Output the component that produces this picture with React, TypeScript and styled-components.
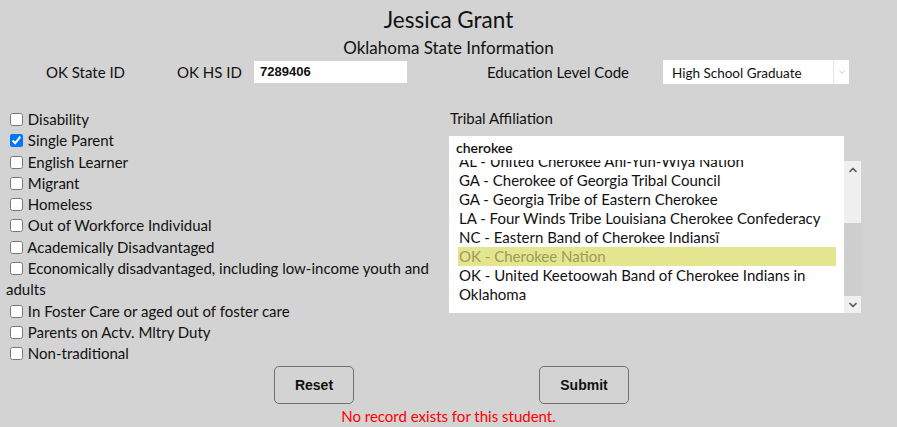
import React from "react";
import styled, { createGlobalStyle } from "styled-components";
import { ChevronUp, ChevronDown } from "lucide-react";

const GlobalStyle = createGlobalStyle`
  html, body { margin: 0; padding: 0; background: #d3d3d3; }
  body { font-family: Lato, "Open Sans", sans-serif; color: #111; }
  * { box-sizing: border-box; }
`;

const Page = styled.div`
  width: 897px;
  height: 427px;
  background: #d3d3d3;
  padding-top: 6px;
  overflow: hidden;
`;

const Title = styled.h1`
  margin: 0;
  font-size: 22.5px;
  font-weight: 400;
  line-height: 28px;
  text-align: center;
`;

const Subtitle = styled.h2`
  margin: 3px 0 0;
  font-size: 17px;
  font-weight: 400;
  line-height: 21px;
  text-align: center;
`;

const IdRow = styled.div`
  display: flex;
  align-items: center;
  height: 24px;
  margin-top: 2px;
  padding-left: 46px;
  font-size: 15px;
`;

const Label = styled.span<{ $w: number }>`
  width: ${(p) => p.$w}px;
  flex: none;
  white-space: nowrap;
`;

const TextInput = styled.div`
  width: 153px;
  height: 22px;
  background: #fff;
  margin-right: 80px;
  padding-left: 6px;
  font-family: "Liberation Sans", Arial, sans-serif;
  font-weight: 700;
  font-size: 13px;
  line-height: 22px;
`;

const Select = styled.div`
  width: 186px;
  height: 24px;
  background: #fff;
  display: flex;
  align-items: center;
  font-size: 13.5px;
`;

const SelectText = styled.span`
  flex: 1;
  padding-left: 9px;
  padding-top: 2px;
`;

const SelectArrow = styled.span`
  width: 16px;
  height: 100%;
  border-left: 1px solid #e6e6e6;
  display: flex;
  align-items: center;
  justify-content: center;
  color: #aaa;
`;

const Main = styled.div`
  display: flex;
  margin-top: 24px;
`;

const LeftCol = styled.div`
  width: 449px;
  padding-left: 6px;
  padding-top: 1px;
  font-size: 15px;
  line-height: 21.3px;
`;

const CheckRow = styled.label`
  display: block;
`;

const Check = styled.input`
  width: 13px;
  height: 13px;
  margin: 0 1px 0 4px;
  vertical-align: -1px;
`;

const RightCol = styled.div`
  width: 412px;
  font-size: 15px;
`;

const FieldLabel = styled.div`
  line-height: 21px;
  padding-left: 1px;
`;

const SearchBox = styled.div`
  margin-top: 7px;
  width: 395px;
  height: 24px;
  background: #fff;
  padding-left: 7px;
  font-size: 14px;
  line-height: 24px;
  font-weight: 600;
`;

const ListBox = styled.div`
  display: flex;
  height: 153px;
`;

const ListViewport = styled.div`
  width: 395px;
  height: 100%;
  background: #fff;
  overflow: hidden;
  padding: 0 8px 0 9px;
`;

const ListInner = styled.div`
  margin-top: -8px;
`;

const Item = styled.div<{ $active?: boolean }>`
  padding-left: 1px;
  line-height: 19px;
  background: ${(p) => (p.$active ? "#e4e68f" : "transparent")};
  color: ${(p) => (p.$active ? "#9b9b5b" : "#111")};
`;

const Scrollbar = styled.div`
  width: 17px;
  margin-top: 1px;
  display: flex;
  flex-direction: column;
  background: #f0f0f0;
`;

const ScrollBtn = styled.div`
  height: 17px;
  display: flex;
  align-items: center;
  justify-content: center;
  color: #5a5a5a;
`;

const ScrollTrack = styled.div<{ $h: number }>`
  height: ${(p) => p.$h}px;
`;

const ScrollThumb = styled.div`
  flex: 1;
  background: #cfcfcf;
`;

const ButtonRow = styled.div`
  display: flex;
  justify-content: center;
  gap: 185px;
  margin-top: 1px;
  padding-left: 6px;
`;

const Button = styled.button<{ $w: number }>`
  width: ${(p) => p.$w}px;
  height: 38px;
  background: transparent;
  border: 1px solid #707070;
  border-radius: 5px;
  font-family: "Liberation Sans", Arial, sans-serif;
  font-weight: 700;
  font-size: 14px;
  color: #111;
`;

const ErrorText = styled.div`
  text-align: center;
  color: #f00;
  font-size: 15px;
  line-height: 20px;
  margin-top: 2px;
`;

const checks: [string, boolean][] = [
  ["Disability", false],
  ["Single Parent", true],
  ["English Learner", false],
  ["Migrant", false],
  ["Homeless", false],
  ["Out of Workforce Individual", false],
  ["Academically Disadvantaged", false],
  ["Economically disadvantaged, including low-income youth and adults", false],
  ["In Foster Care or aged out of foster care", false],
  ["Parents on Actv. Mltry Duty", false],
  ["Non-traditional", false],
];

const tribes = [
  "AL - United Cherokee Ani-Yun-Wiya Nation",
  "GA - Cherokee of Georgia Tribal Council",
  "GA - Georgia Tribe of Eastern Cherokee",
  "LA - Four Winds Tribe Louisiana Cherokee Confederacy",
  "NC - Eastern Band of Cherokee Indiansï",
  "OK - Cherokee Nation",
  "OK - United Keetoowah Band of Cherokee Indians in Oklahoma",
];

export default function App() {
  return (
    <Page>
      <GlobalStyle />
      <Title>Jessica Grant</Title>
      <Subtitle>Oklahoma State Information</Subtitle>
      <IdRow>
        <Label $w={131}>OK State ID</Label>
        <Label $w={77}>OK HS ID</Label>
        <TextInput>7289406</TextInput>
        <Label $w={176}>Education Level Code</Label>
        <Select>
          <SelectText>High School Graduate</SelectText>
          <SelectArrow>
            <ChevronDown size={10} strokeWidth={1.5} />
          </SelectArrow>
        </Select>
      </IdRow>
      <Main>
        <LeftCol>
          {checks.map(([t, c]) => (
            <CheckRow key={t}>
              <Check type="checkbox" defaultChecked={c} /> {t}
            </CheckRow>
          ))}
        </LeftCol>
        <RightCol>
          <FieldLabel>Tribal Affiliation</FieldLabel>
          <SearchBox>cherokee</SearchBox>
          <ListBox>
            <ListViewport>
              <ListInner>
                {tribes.map((t) => (
                  <Item key={t} $active={t === "OK - Cherokee Nation"}>
                    {t}
                  </Item>
                ))}
              </ListInner>
            </ListViewport>
            <Scrollbar>
              <ScrollBtn>
                <ChevronUp size={12} strokeWidth={3.5} />
              </ScrollBtn>
              <ScrollTrack $h={45} />
              <ScrollThumb />
              <ScrollBtn>
                <ChevronDown size={12} strokeWidth={3.5} />
              </ScrollBtn>
            </Scrollbar>
          </ListBox>
        </RightCol>
      </Main>
      <ButtonRow>
        <Button $w={80}>Reset</Button>
        <Button $w={90}>Submit</Button>
      </ButtonRow>
      <ErrorText>No record exists for this student.</ErrorText>
    </Page>
  );
}
